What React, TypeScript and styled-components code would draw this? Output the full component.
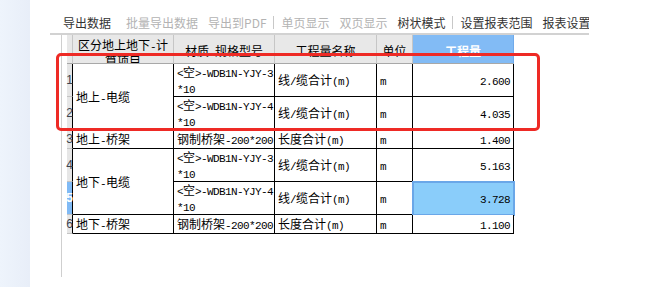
import React from 'react';
import styled, { createGlobalStyle } from 'styled-components';

const GlobalStyle = createGlobalStyle`
  html, body {
    margin: 0;
    padding: 0;
    background: #fff;
  }
  body {
    font-family: "Noto Sans CJK SC", "Liberation Sans", sans-serif;
  }
`;

// --- layout ---
const Page = styled.div`
  position: relative;
  display: flex;
  width: 655px;
  height: 287px;
  overflow: hidden;
  background: #fff;
`;

const SideStrip = styled.div`
  width: 30px;
  flex-shrink: 0;
  background: linear-gradient(to right, #eef4fc, #e8eef8);
`;

const Main = styled.div`
  display: flex;
  flex-direction: column;
  padding-left: 20px;
`;

const Toolbar = styled.div`
  display: flex;
  align-items: center;
  width: 539px;
  height: 35px;
  box-sizing: border-box;
  padding: 12px 0 0 13px;
  border-bottom: 2px solid #d2d2d2;
  overflow: hidden;
  white-space: nowrap;
`;

const ToolItem = styled.span<{ $disabled?: boolean; $first?: boolean }>`
  font-size: 12px;
  line-height: 16px;
  color: ${({ $disabled }) => ($disabled ? '#b3b3b3' : '#333')};
  margin-right: ${({ $first }) => ($first ? '15px' : '10px')};
  flex-shrink: 0;
`;

const ToolSep = styled.span`
  width: 1px;
  height: 13px;
  background: #c8c8c8;
  margin: 0 8px 0 -4px;
  flex-shrink: 0;
`;

const Panel = styled.div`
  margin-left: 11px;
  height: 242px;
  border-left: 1px solid #cfcfcf;
  padding-left: 5px;
`;

// --- grid ---
const Grid = styled.div`
  display: grid;
  grid-template-columns: 6px 101px 101px 102px 36px 101px;
  grid-template-rows: 29px 33px 33px 19px 33px 33px 19px;
  font-size: 12px;
  color: #000;
`;

const Corner = styled.div`
  box-sizing: border-box;
  background: #e8e8e8;
  border-right: 1px solid #c6c6c6;
  border-bottom: 1px solid #a8a8a8;
`;

const HeadCell = styled.div<{ $accent?: boolean; $wrap?: boolean }>`
  box-sizing: border-box;
  display: flex;
  justify-content: center;
  align-items: ${({ $wrap }) => ($wrap ? 'flex-start' : 'center')};
  padding: ${({ $wrap }) => ($wrap ? '2px 1px 0' : '3px 1px 0')};
  line-height: 15px;
  text-align: center;
  overflow: hidden;
  background: ${({ $accent }) => ($accent ? '#82bbf5' : '#e8e8e8')};
  color: ${({ $accent }) => ($accent ? '#fff' : '#000')};
  font-weight: ${({ $accent }) => ($accent ? 700 : 400)};
  border-right: 1px solid ${({ $accent }) => ($accent ? '#70aaea' : '#c6c6c6')};
  border-bottom: 1px solid #a8a8a8;
`;

const RowNum = styled.div<{ $active?: boolean }>`
  box-sizing: border-box;
  display: flex;
  align-items: center;
  justify-content: center;
  font-family: "Liberation Sans", Arial, sans-serif;
  font-size: 12px;
  font-weight: ${({ $active }) => ($active ? 700 : 400)};
  color: ${({ $active }) => ($active ? '#fff' : '#3c4450')};
  background: ${({ $active }) => ($active ? '#80baf5' : '#e6e6e6')};
  border-right: 1px solid #000;
  border-bottom: 1px solid #c4c4c4;
`;

const Cell = styled.div<{ $right?: boolean; $span?: number; $selected?: boolean }>`
  box-sizing: border-box;
  grid-row: span ${({ $span }) => $span ?? 1};
  display: flex;
  align-items: center;
  justify-content: ${({ $right }) => ($right ? 'flex-end' : 'flex-start')};
  padding: 0 3px;
  line-height: 16px;
  white-space: pre;
  background: ${({ $selected }) => ($selected ? '#8acdfa' : '#fff')};
  border-right: 1px solid #000;
  border-bottom: 1px solid #000;
  ${({ $selected }) =>
    $selected &&
    `
    outline: 2px solid #6aa7e8;
    outline-offset: -1px;
  `}
`;

const Latin = styled.span`
  font-family: "Liberation Mono", monospace;
  font-size: 11px;
  line-height: 11px;
  letter-spacing: -0.6px;
`;

const RedMark = styled.div`
  position: absolute;
  left: 56px;
  top: 53px;
  width: 484px;
  height: 78px;
  box-sizing: border-box;
  border: 3px solid #ee2a25;
  border-radius: 5px;
  pointer-events: none;
`;

// 中文和半角字符分开排，半角用等宽窄字
function Mixed({ text }: { text: string }) {
  const parts = text.split(/([\x00-\xff]+)/).filter(Boolean);
  return (
    <span>
      {parts.map((p, i) =>
        /^[\x00-\xff]+$/.test(p) ? <Latin key={i}>{p}</Latin> : <React.Fragment key={i}>{p}</React.Fragment>
      )}
    </span>
  );
}

type Row = {
  n: number;
  group?: string;
  span?: number;
  spec: string;
  name: string;
  unit: string;
  qty: string;
  active?: boolean;
};

const rows: Row[] = [
  { n: 1, group: '地上-电缆', span: 2, spec: '<空>-WDB1N-YJY-3\n*10', name: '线/缆合计(m)', unit: 'm', qty: '2.600' },
  { n: 2, spec: '<空>-WDB1N-YJY-4\n*10', name: '线/缆合计(m)', unit: 'm', qty: '4.035' },
  { n: 3, group: '地上-桥架', span: 1, spec: '钢制桥架-200*200', name: '长度合计(m)', unit: 'm', qty: '1.400' },
  { n: 4, group: '地下-电缆', span: 2, spec: '<空>-WDB1N-YJY-3\n*10', name: '线/缆合计(m)', unit: 'm', qty: '5.163' },
  { n: 5, spec: '<空>-WDB1N-YJY-4\n*10', name: '线/缆合计(m)', unit: 'm', qty: '3.728', active: true },
  { n: 6, group: '地下-桥架', span: 1, spec: '钢制桥架-200*200', name: '长度合计(m)', unit: 'm', qty: '1.100' },
];

const tools = [
  { label: '导出数据' },
  { label: '批量导出数据', disabled: true },
  { label: '导出到PDF', disabled: true, sep: true },
  { label: '单页显示', disabled: true },
  { label: '双页显示', disabled: true },
  { label: '树状模式', sep: true },
  { label: '设置报表范围' },
  { label: '报表设置' },
];

export default function App() {
  return (
    <Page>
      <GlobalStyle />
      <SideStrip />
      <Main>
        <Toolbar>
          {tools.map((t, i) => (
            <React.Fragment key={t.label}>
              <ToolItem $disabled={t.disabled} $first={i === 0}>
                {t.label}
              </ToolItem>
              {t.sep && <ToolSep />}
            </React.Fragment>
          ))}
        </Toolbar>
        <Panel>
          <Grid>
            <Corner />
            <HeadCell $wrap>
              <Mixed text="区分地上地下-计算项目" />
            </HeadCell>
            <HeadCell>
              <Mixed text="材质-规格型号" />
            </HeadCell>
            <HeadCell>工程量名称</HeadCell>
            <HeadCell>单位</HeadCell>
            <HeadCell $accent>工程量</HeadCell>

            {rows.map((r) => (
              <React.Fragment key={r.n}>
                <RowNum $active={r.active}>{r.n}</RowNum>
                {r.group && (
                  <Cell $span={r.span}>
                    <Mixed text={r.group} />
                  </Cell>
                )}
                <Cell>
                  <Mixed text={r.spec} />
                </Cell>
                <Cell>
                  <Mixed text={r.name} />
                </Cell>
                <Cell>
                  <Mixed text={r.unit} />
                </Cell>
                <Cell $right $selected={r.active}>
                  <Mixed text={r.qty} />
                </Cell>
              </React.Fragment>
            ))}
          </Grid>
        </Panel>
      </Main>
      <RedMark />
    </Page>
  );
}
